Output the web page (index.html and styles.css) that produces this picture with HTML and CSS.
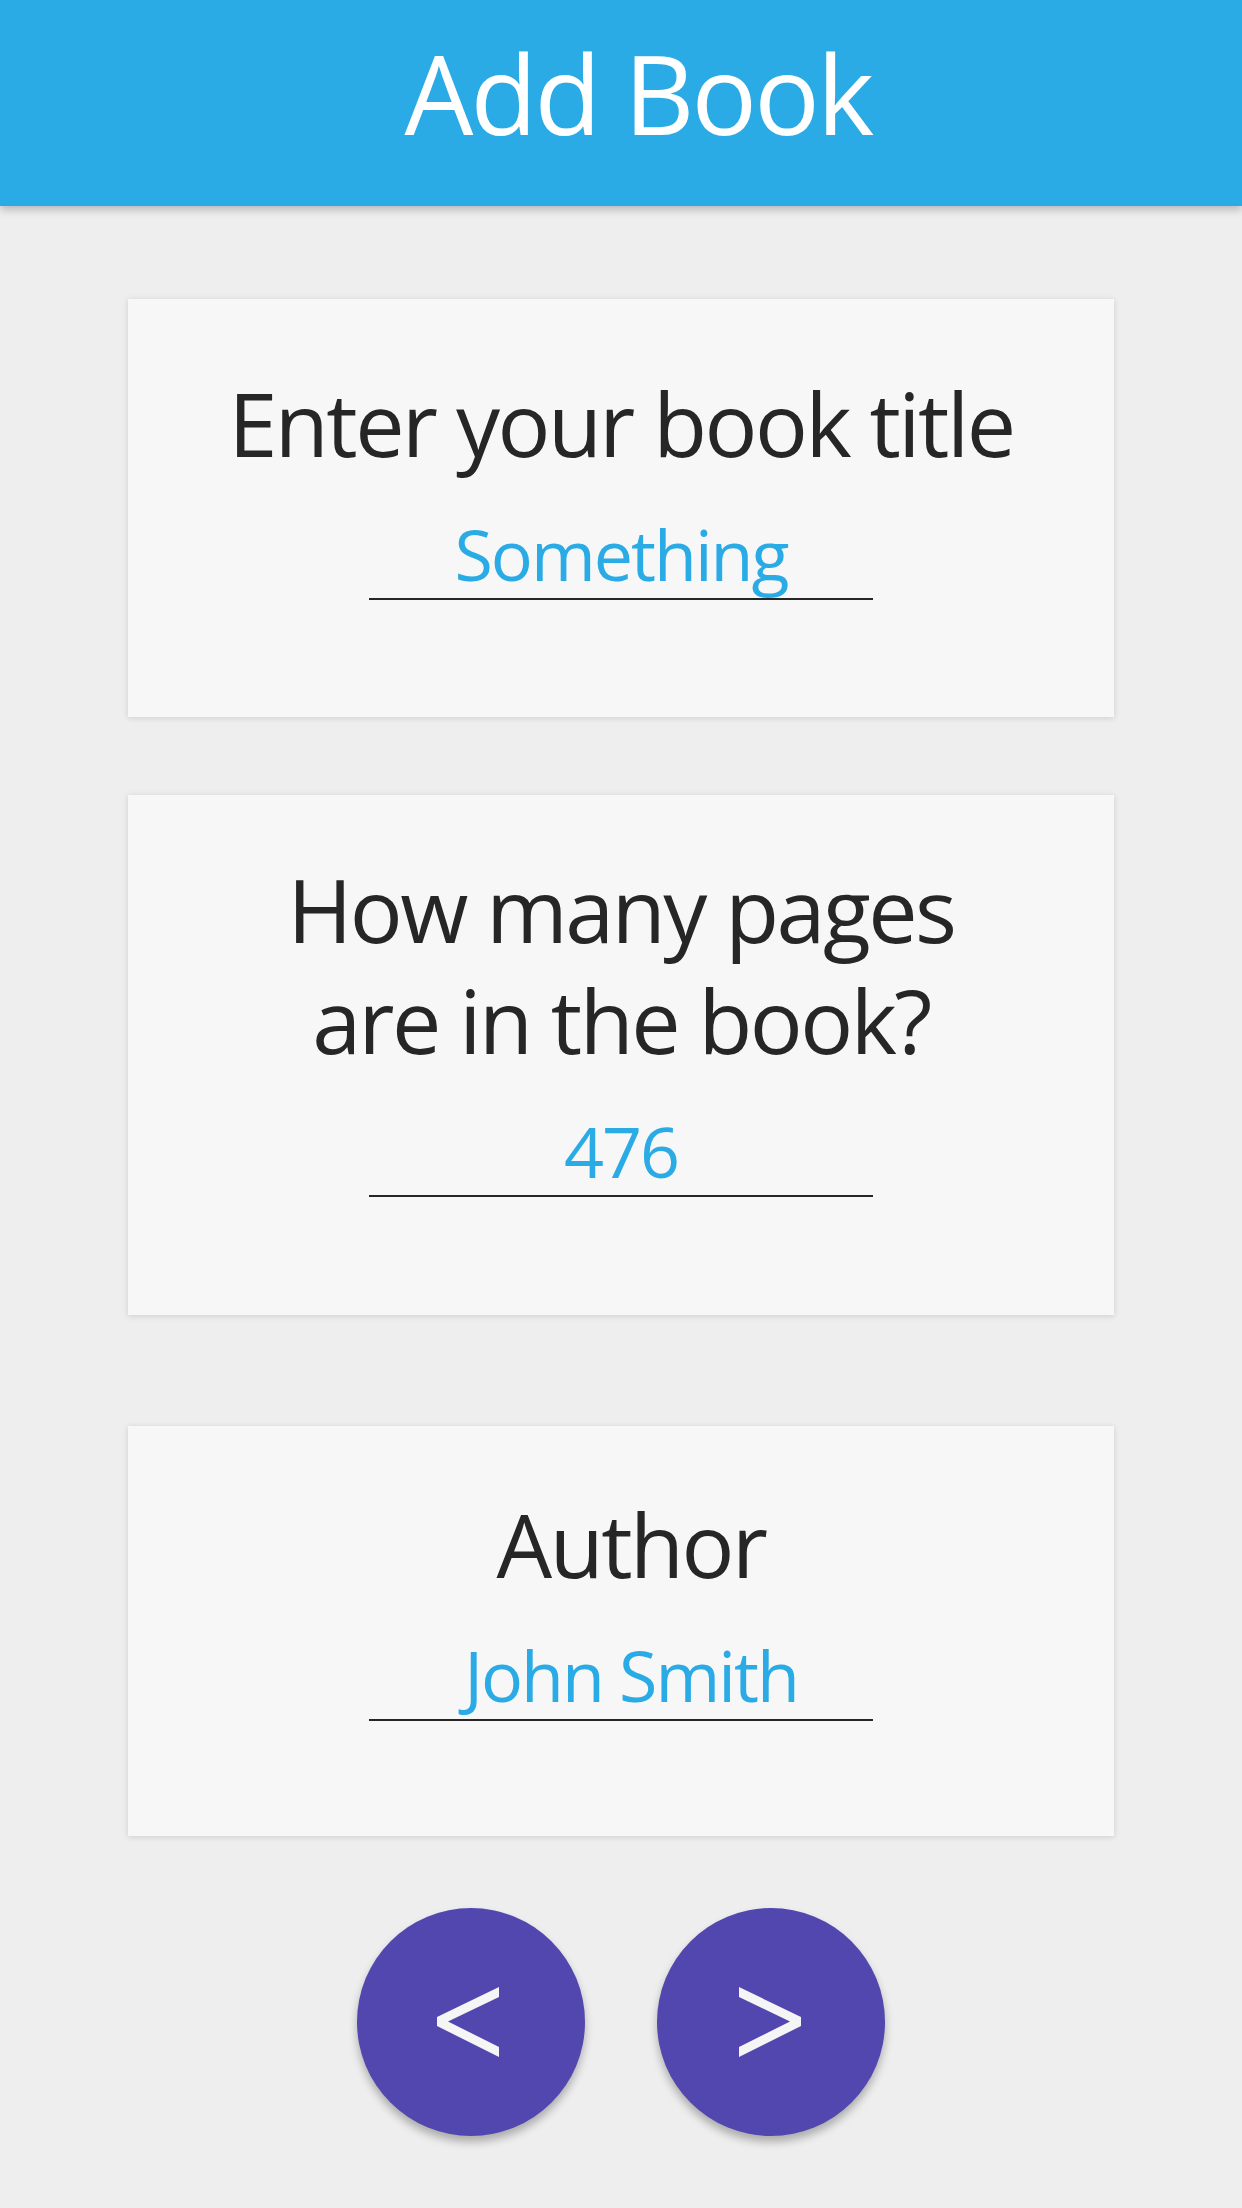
FILE: index.html
```html
<!DOCTYPE html>
<html lang="en">
<head>
<meta charset="utf-8">
<title>Add Book</title>
<link rel="stylesheet" href="styles.css">
</head>
<body>
<header class="app-bar">
  <h1 class="app-title">Add Book</h1>
</header>
<main class="content">
  <section class="card card-title">
    <h2 class="question">Enter your book title</h2>
    <div class="field"><span class="value">Something</span></div>
  </section>
  <section class="card card-pages">
    <h2 class="question">How many pages<br>are in the book?</h2>
    <div class="field"><span class="value">476</span></div>
  </section>
  <section class="card card-author">
    <h2 class="question shift">Author</h2>
    <div class="field"><span class="value shift">John Smith</span></div>
  </section>
  <nav class="nav-buttons">
    <button class="fab" aria-label="Previous">
      <svg viewBox="0 0 228 228" width="228" height="228"><polygon points="142,79 80,109 80,118 142,149 142,139 91,113.5 142,89" fill="#f5f5f5"/></svg>
    </button>
    <button class="fab" aria-label="Next">
      <svg viewBox="0 0 228 228" width="228" height="228"><polygon points="82,79 144,109 144,118 82,149 82,139 133,113.5 82,89" fill="#f5f5f5"/></svg>
    </button>
  </nav>
</main>
</body>
</html>
```
FILE: styles.css
```css
* { box-sizing: border-box; }
html, body { margin: 0; padding: 0; }
body {
  width: 1242px;
  min-height: 2208px;
  background: #eeeeee;
  font-family: "Open Sans", "Noto Sans", sans-serif;
  overflow: hidden;
}
.app-bar {
  height: 206px;
  background: #2aabe5;
  box-shadow: 0 4px 8px rgba(0,0,0,0.22);
  padding-bottom: 20px;
  position: relative;
  z-index: 1;
}
.app-title {
  margin: 0;
  padding-left: 34px;
  font-size: 109px;
  font-weight: 400;
  line-height: 186px;
  color: #ffffff;
  text-align: center;
  letter-spacing: -2.8px;
}
.content {
  display: flex;
  flex-direction: column;
  align-items: center;
  padding-top: 93px;
}
.card {
  width: 986px;
  background: #f7f7f7;
  box-shadow: 0 1px 6px rgba(0,0,0,0.14);
  display: flex;
  flex-direction: column;
  align-items: center;
}
.card-title { padding: 69px 0 117px; }
.card-pages { padding: 59px 0 118px; margin-top: 78px; }
.card-author { padding: 63px 0 115px; margin-top: 111px; }
.question {
  margin: 0;
  font-size: 88px;
  font-weight: 400;
  line-height: 111px;
  color: #262626;
  text-align: center;
  letter-spacing: -2.5px;
}
.field {
  margin-top: 35px;
  width: 504px;
  border-bottom: 2px solid #262626;
  padding-bottom: 4px;
  text-align: center;
}
.value {
  display: block;
  font-size: 70px;
  line-height: 80px;
  color: #2aabe5;
  letter-spacing: -2px;
}
.shift { position: relative; left: 10px; }
.nav-buttons {
  display: flex;
  gap: 72px;
  margin-top: 72px;
}
.fab {
  width: 228px;
  height: 228px;
  border: none;
  padding: 0;
  border-radius: 50%;
  background: #5247ae;
  box-shadow: 0 6px 8px rgba(0,0,0,0.28);
  display: flex;
  align-items: center;
  justify-content: center;
}
.fab svg { display: block; }
```
